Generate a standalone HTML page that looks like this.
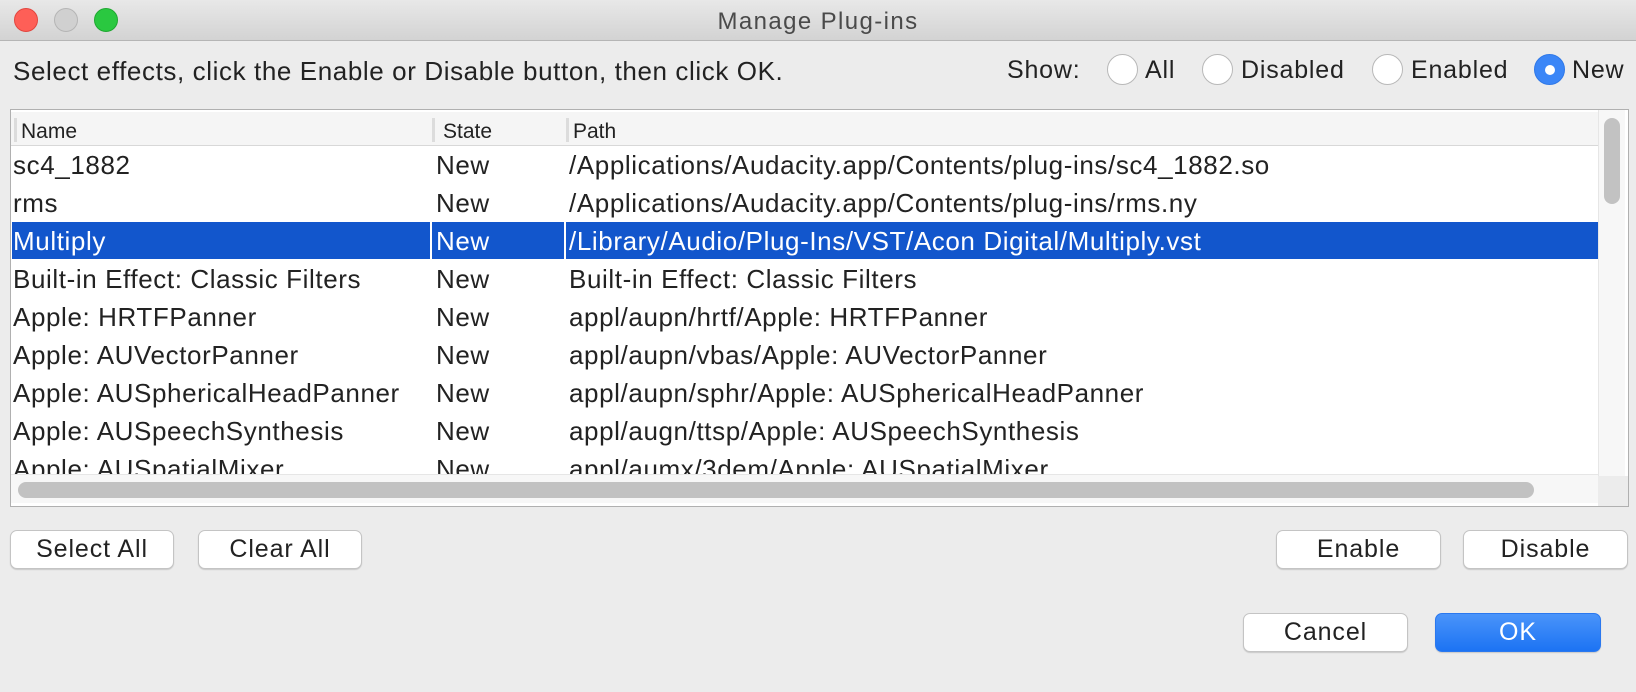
<!DOCTYPE html>
<html><head><meta charset="utf-8"><style>
*{margin:0;padding:0;box-sizing:border-box}
body{width:1636px;height:692px;background:#ececec;font-family:"Liberation Sans",sans-serif;color:#222;position:relative;overflow:hidden}
.abs{position:absolute}
.title{left:0;top:0;width:1636px;height:41px;background:linear-gradient(#e8e8e8,#d3d3d3);border-bottom:1px solid #b5b5b5}
.tl{width:24px;height:24px;border-radius:50%;top:8px}
.t{font-size:25px;white-space:nowrap;letter-spacing:0.8px}
.radio{width:31px;height:31px;border-radius:50%;background:#fff;border:1px solid #b8b8b8;top:54px}
.box{left:10px;top:109px;width:1619px;height:398px;border:1px solid #b0b0b0;background:#fff}
.row{position:absolute;left:1px;height:38px;width:1586px;font-size:26px;line-height:37px;letter-spacing:0.6px}
.row span{position:absolute;top:0;white-space:nowrap}
.btn{background:#fff;border:1px solid #c4c4c4;border-radius:7px;box-shadow:0 1px 1px rgba(0,0,0,.15);font-size:25px;letter-spacing:0.9px;text-align:center;line-height:37px;height:39px}
</style></head><body>
<div class="abs title"></div>
<div class="abs tl" style="left:14px;background:#fe5f57;border:1px solid #e2463f"></div>
<div class="abs tl" style="left:54px;background:#d0d0d0;border:1px solid #b5b5b5"></div>
<div class="abs tl" style="left:94px;background:#2ac840;border:1px solid #1fa831"></div>
<div class="abs t" style="left:0;width:1636px;text-align:center;top:8px;font-size:24px;letter-spacing:1.4px;color:#4a4a4a">Manage Plug-ins</div>
<div class="abs t" style="left:13px;top:56px;font-size:26px;letter-spacing:0.6px">Select effects, click the Enable or Disable button, then click OK.</div>
<div class="abs t" style="left:1007px;top:56px">Show:</div>
<div class="abs radio" style="left:1107px"></div><div class="abs t" style="left:1145px;top:56px">All</div>
<div class="abs radio" style="left:1202px"></div><div class="abs t" style="left:1241px;top:56px">Disabled</div>
<div class="abs radio" style="left:1372px"></div><div class="abs t" style="left:1411px;top:56px">Enabled</div>
<div class="abs radio" style="left:1534px;background:#3b86f7;border-color:#2f78e8"><div style="position:absolute;left:10px;top:10px;width:10px;height:10px;border-radius:50%;background:#fff"></div></div><div class="abs t" style="left:1572px;top:56px">New</div>

<div class="abs box">
 <div class="abs" style="left:0;top:2px;width:1587px;height:34px;background:#f5f5f5;border-bottom:1px solid #d8d8d8"></div>
 <div class="abs" style="left:3px;top:8px;width:3px;height:24px;background:#dcdcdc"></div>
 <div class="abs" style="left:421px;top:8px;width:3px;height:24px;background:#dcdcdc"></div>
 <div class="abs" style="left:555px;top:8px;width:3px;height:24px;background:#dcdcdc"></div>
 <div class="abs" style="left:10px;top:10px;font-size:21px">Name</div>
 <div class="abs" style="left:432px;top:10px;font-size:21px">State</div>
 <div class="abs" style="left:562px;top:10px;font-size:21px">Path</div>
 <div class="abs" style="left:0;top:36px;width:1587px;height:328px;overflow:hidden">
  <div class="row" style="top:1px"><span style="left:1px">sc4_1882</span><span style="left:424px">New</span><span style="left:557px">/Applications/Audacity.app/Contents/plug-ins/sc4_1882.so</span></div>
  <div class="row" style="top:39px"><span style="left:1px">rms</span><span style="left:424px">New</span><span style="left:557px">/Applications/Audacity.app/Contents/plug-ins/rms.ny</span></div>
  <div class="row" style="top:76px;color:#fff">
   <div class="abs" style="left:0;top:0;width:418px;height:37px;background:#1256cc"></div>
   <div class="abs" style="left:420px;top:0;width:132px;height:37px;background:#1256cc"></div>
   <div class="abs" style="left:554px;top:0;width:1032px;height:37px;background:#1256cc"></div>
   <span style="left:1px;line-height:39px">Multiply</span><span style="left:424px;line-height:39px">New</span><span style="left:557px;line-height:39px">/Library/Audio/Plug-Ins/VST/Acon Digital/Multiply.vst</span></div>
  <div class="row" style="top:115px"><span style="left:1px">Built-in Effect: Classic Filters</span><span style="left:424px">New</span><span style="left:557px">Built-in Effect: Classic Filters</span></div>
  <div class="row" style="top:153px"><span style="left:1px">Apple: HRTFPanner</span><span style="left:424px">New</span><span style="left:557px">appl/aupn/hrtf/Apple: HRTFPanner</span></div>
  <div class="row" style="top:191px"><span style="left:1px">Apple: AUVectorPanner</span><span style="left:424px">New</span><span style="left:557px">appl/aupn/vbas/Apple: AUVectorPanner</span></div>
  <div class="row" style="top:229px"><span style="left:1px">Apple: AUSphericalHeadPanner</span><span style="left:424px">New</span><span style="left:557px">appl/aupn/sphr/Apple: AUSphericalHeadPanner</span></div>
  <div class="row" style="top:267px"><span style="left:1px">Apple: AUSpeechSynthesis</span><span style="left:424px">New</span><span style="left:557px">appl/augn/ttsp/Apple: AUSpeechSynthesis</span></div>
  <div class="row" style="top:305px"><span style="left:1px">Apple: AUSpatialMixer</span><span style="left:424px">New</span><span style="left:557px">appl/aumx/3dem/Apple: AUSpatialMixer</span></div>
 </div>
 <div class="abs" style="left:0;top:364px;width:1587px;height:29px;background:#f7f7f7;border-top:1px solid #e6e6e6"></div>
 <div class="abs" style="left:7px;top:372px;width:1516px;height:16px;border-radius:8px;background:#c2c2c2"></div>
 <div class="abs" style="left:1587px;top:0;width:27px;height:366px;background:#f7f7f7;border-left:1px solid #e6e6e6"></div>
 <div class="abs" style="left:1593px;top:8px;width:16px;height:86px;border-radius:8px;background:#c2c2c2"></div>
 <div class="abs" style="left:1587px;top:366px;width:30px;height:30px;background:#ececec"></div>
</div>

<div class="abs btn" style="left:10px;top:530px;width:164px">Select All</div>
<div class="abs btn" style="left:198px;top:530px;width:164px">Clear All</div>
<div class="abs btn" style="left:1276px;top:530px;width:165px">Enable</div>
<div class="abs btn" style="left:1463px;top:530px;width:165px">Disable</div>
<div class="abs btn" style="left:1243px;top:613px;width:165px">Cancel</div>
<div class="abs btn" style="left:1435px;top:613px;width:166px;background:linear-gradient(#4a94fa,#1c73f3);border-color:#2a78ef;color:#fff">OK</div>
</body></html>
